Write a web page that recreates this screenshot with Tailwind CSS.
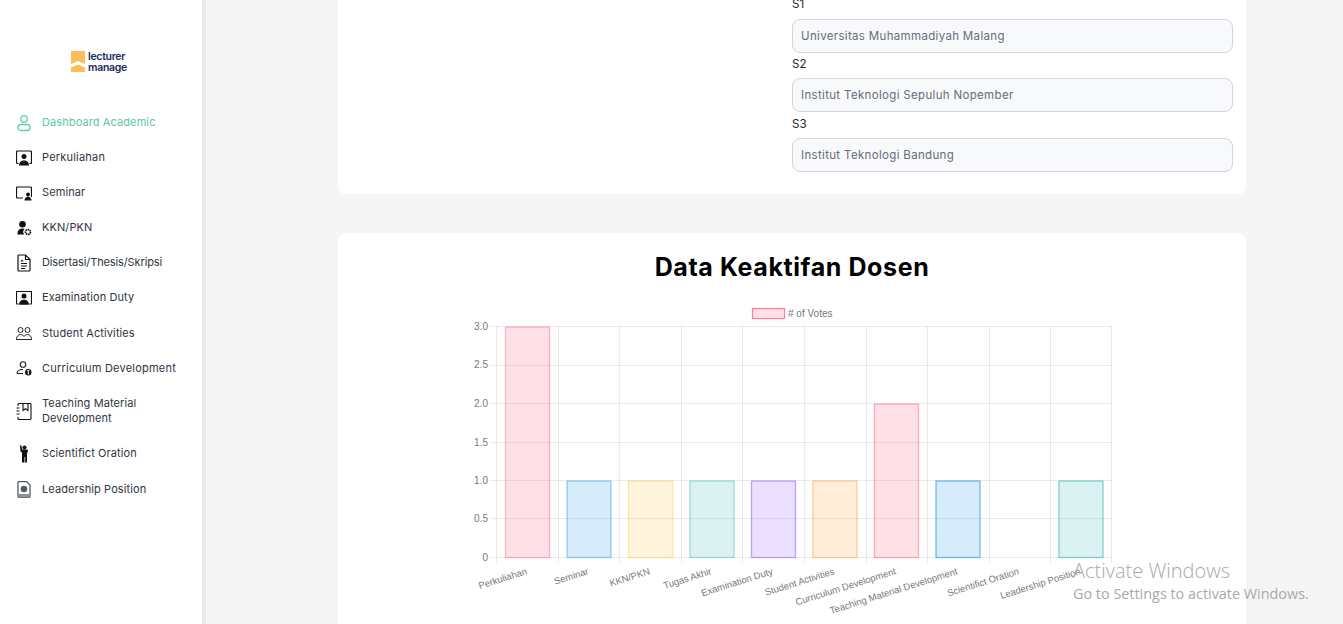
<!DOCTYPE html>
<html lang="en">
  <head>
    <meta charset="UTF-8" />
    <meta name="viewport" content="width=device-width, initial-scale=1.0" />
    <script src="https://cdn.jsdelivr.net/npm/@tailwindcss/browser@4"></script>
    <title>Lecturer Manage</title>
  </head>
  <body class="bg-[#f5f5f5] font-['Inter',sans-serif] overflow-hidden">
    <div class="relative flex h-[624px] overflow-hidden">
      <!-- Sidebar -->
      <aside class="w-[206px] h-full shrink-0 bg-white border-r-[4px] border-[#e8e8ee]">
        <div class="flex items-start h-[105px] pl-[71px] pt-[51px] gap-[3px]">
          <svg width="14" height="21" viewBox="0 0 14 21">
            <path d="M0 0h14v13L7 10 0 13z" fill="#fdbd5a" />
            <path d="M0 16.500l7-3 7 3V21H0z" fill="#fdbd5a" />
          </svg>
          <div class="text-[10.500px] leading-[11px] font-semibold text-[#1e2a5e] tracking-[-0.3px]">lecturer<br />manage</div>
        </div>
        <nav class="text-[11px] tracking-[0.1px] text-[#2f3542] leading-[15px]">
          <a class="flex items-center h-[35px] pl-[16px] gap-[10px] text-[#5cc9a0]">
            <svg class="w-[16px] h-[18px] shrink-0" viewBox="0 0 16 18" fill="none" stroke="#5ed3a6" stroke-width="1.300">
              <circle cx="8" cy="5" r="3.300" />
              <rect x="2" y="10.500" width="12" height="6" rx="3" />
            </svg>
            Dashboard Academic
          </a>
          <a class="flex items-center h-[35px] pl-[16px] gap-[10px] tracking-[0.2px]">
            <svg class="w-[16px] h-[16px] shrink-0" viewBox="0 0 16 16" fill="none" stroke="#111" stroke-width="1.200">
              <path d="M2.500 13.500H1.500a1 1 0 0 1-1-1V2a1 1 0 0 1 1-1h13a1 1 0 0 1 1 1v10.500a1 1 0 0 1-1 1H13.500" />
              <circle cx="8" cy="6.500" r="2.500" fill="#111" stroke="none" />
              <path d="M3 15.500c0-3 2-5 5-5s5 2 5 5z" fill="#111" stroke="none" />
            </svg>
            Perkuliahan
          </a>
          <a class="flex items-center h-[35px] pl-[16px] gap-[10px]">
            <svg class="w-[16px] h-[16px] shrink-0" viewBox="0 0 16 16" fill="none" stroke="#111" stroke-width="1.200">
              <path d="M7 13H1.500a1 1 0 0 1-1-1V3a1 1 0 0 1 1-1h13a1 1 0 0 1 1 1v9" />
              <circle cx="12" cy="9.500" r="2" fill="#111" stroke="none" />
              <path d="M8.500 15.500c0-2.500 1.500-3.800 3.500-3.800s3.500 1.300 3.500 3.800z" fill="#111" stroke="none" />
            </svg>
            Seminar
          </a>
          <a class="flex items-center h-[35px] pl-[16px] gap-[10px]">
            <svg class="w-[16px] h-[16px] shrink-0" viewBox="0 0 16 16">
              <circle cx="6.500" cy="4.300" r="3.300" fill="#111" />
              <path d="M1.500 14.500v-1.500c0-2.500 2-4.500 5-4.500 1 0 1.600.2 2.200.5a4 4 0 0 0-.5 5.500z" fill="#111" />
              <circle cx="12" cy="12" r="2.500" fill="none" stroke="#111" stroke-width="1.700" stroke-dasharray="1.600 .6" />
            </svg>
            KKN/PKN
          </a>
          <a class="flex items-center h-[35px] pl-[16px] gap-[10px] tracking-[-0.12px]">
            <svg class="w-[16px] h-[18px] shrink-0" viewBox="0 0 16 18" fill="none" stroke="#111" stroke-width="1.200">
              <path d="M3 1h6.500L14 5.500V16a1 1 0 0 1-1 1H3a1 1 0 0 1-1-1V2a1 1 0 0 1 1-1z" />
              <path d="M9.500 1v4.500H14M5 9.500h6M5 12h6M5 14.500h4" />
              <path d="M4.500 7.500l1.500-2 1.500 2z" fill="#111" stroke="none" />
            </svg>
            Disertasi/Thesis/Skripsi
          </a>
          <a class="flex items-center h-[35px] pl-[16px] gap-[10px]">
            <svg class="w-[16px] h-[14px] shrink-0" viewBox="0 0 16 14" fill="none" stroke="#111" stroke-width="1.200">
              <path d="M2.500 13H1a.5.5 0 0 1-.5-.5V1A.5.5 0 0 1 1 .5h14a.5.5 0 0 1 .5.5v11.500a.5.5 0 0 1-.5.5h-1.500" />
              <circle cx="8" cy="5" r="2.500" fill="#111" stroke="none" />
              <path d="M3 13.800c0-3 2-5 5-5s5 2 5 5z" fill="#111" stroke="none" />
            </svg>
            Examination Duty
          </a>
          <a class="flex items-center h-[36px] pl-[16px] gap-[10px]">
            <svg class="w-[16px] h-[13px] shrink-0" viewBox="0 0 16 13" fill="none" stroke="#222" stroke-width="1">
              <circle cx="4.500" cy="3" r="2.500" />
              <circle cx="11.500" cy="3" r="2.500" />
              <path d="M.5 12.500c0-3 1.500-5 4-5 1.500 0 2.500.6 3.500 1.800 1-1.200 2-1.800 3.500-1.800 2.500 0 4 2 4 5z" />
            </svg>
            Student Activities
          </a>
          <a class="flex items-center h-[35px] pl-[16px] gap-[10px] tracking-[0.22px]">
            <svg class="w-[16px] h-[15px] shrink-0" viewBox="0 0 16 15" fill="none" stroke="#222" stroke-width="1.100">
              <circle cx="7" cy="3.500" r="2.800" />
              <path d="M1 12.500c0-2.500 2.500-4 6-4" />
              <path d="M1 12.500h6" />
              <circle cx="12.300" cy="11.300" r="3.200" fill="#111" stroke="none" />
              <path d="M12.300 10.500v3M11 9.800h2.600" stroke="#fff" />
            </svg>
            Curriculum Development
          </a>
          <a class="flex items-center h-[50px] pl-[16px] gap-[10px]">
            <svg class="w-[16px] h-[17px] shrink-0" viewBox="0 0 16 17" fill="none" stroke="#111" stroke-width="1.100">
              <path d="M2 3V1.500a1 1 0 0 1 1-1h11a1 1 0 0 1 1 1v14a1 1 0 0 1-1 1H3a1 1 0 0 1-1-1V14" />
              <path d="M0.500 5h3M0.500 8h3M0.500 11h3" />
              <path d="M7 .5v7l2.500-1.800L12 7.500v-7" />
            </svg>
            <span>Teaching Material<br />Development</span>
          </a>
          <a class="flex items-center h-[35px] pl-[16px] gap-[10px]">
            <svg class="w-[16px] h-[18px] shrink-0" viewBox="0 0 16 18" fill="#111">
              <circle cx="8.500" cy="2.500" r="2" />
              <path d="M4 .500l1.300-.300 1 4.300h5l.7 1-1 3.500V17.500H9.200V12H8.500v5.500H6V7.500L4.500 6.500z" />
            </svg>
            Scientifict Oration
          </a>
          <a class="flex items-center h-[36px] pl-[16px] gap-[10px]">
            <svg class="w-[16px] h-[17px] shrink-0" viewBox="0 0 16 17">
              <path d="M3 .5h7.500L14 4v11.500a1 1 0 0 1-1 1H3a1 1 0 0 1-1-1v-14a1 1 0 0 1 1-1z" fill="#fff" stroke="#555b66" stroke-width="1.300" />
              <circle cx="8" cy="8" r="3.300" fill="#555b66" />
              <path d="M2 13h12v2.500a1 1 0 0 1-1 1H3a1 1 0 0 1-1-1z" fill="#8a8f98" />
            </svg>
            Leadership Position
          </a>
        </nav>
      </aside>

      <!-- Content -->
      <main class="flex-1 pl-[132px] pr-[97px] -mt-[6px]">
        <section class="bg-white rounded-b-lg h-[200px] pl-[454px] pr-[13px] text-[11.500px] leading-[16px] text-[#212529]">
          <label class="block pt-[2px]">S1</label>
          <div class="flex items-center h-[34px] mt-[7px] px-[8px] rounded-lg border border-[#d4d4de] bg-[#f8f9fb] text-[#666d78] tracking-[0.33px]">Universitas Muhammadiyah Malang</div>
          <label class="block mt-[3px]">S2</label>
          <div class="flex items-center h-[34px] mt-[6px] px-[8px] rounded-lg border border-[#d4d4de] bg-[#f8f9fb] text-[#666d78] tracking-[0.33px]">Institut Teknologi Sepuluh Nopember</div>
          <label class="block mt-[4px]">S3</label>
          <div class="flex items-center h-[34px] mt-[6px] px-[8px] rounded-lg border border-[#d4d4de] bg-[#f8f9fb] text-[#666d78] tracking-[0.33px]">Institut Teknologi Bandung</div>
        </section>

        <section class="bg-white rounded-lg mt-[39px] h-[420px]">
          <h2 class="pt-[17px] text-center text-[25px] leading-[34px] font-bold tracking-[0.6px] text-black">Data Keaktifan Dosen</h2>
          <svg class="mt-[16px] block" width="908" height="320" viewBox="338 300 908 320" font-family="'Liberation Sans',sans-serif" font-size="10" fill="#777">
            <!-- legend -->
            <rect x="752.500" y="308.500" width="32" height="10" fill="rgb(255 99 132 / .2)" stroke="rgb(255 99 132 / .8)" stroke-width="1.200" />
            <text x="788" y="317">&#35; of Votes</text>
            <!-- grid -->
            <g stroke="rgb(0 0 0 / .08)" stroke-width="1">
              <path d="M490 326.500H1112M490 365.500H1112M490 403.500H1112M490 442.500H1112M490 480.500H1112M490 518.500H1112M490 557.500H1112" />
              <path d="M496.500 326V563M558.500 326V563M619.500 326V563M681.500 326V563M742.500 326V563M804.500 326V563M866.500 326V563M927.500 326V563M989.500 326V563M1050.500 326V563M1111.500 326V563" />
            </g>
            <!-- bars -->
            <g stroke-width="1.300">
              <rect x="505.500" y="327" width="44" height="230.500" fill="rgb(255 99 132 / .2)" stroke="rgb(255 99 132 / .45)" />
              <rect x="567" y="481" width="44" height="76.500" fill="rgb(54 162 235 / .2)" stroke="rgb(54 162 235 / .5)" />
              <rect x="628.500" y="481" width="44" height="76.500" fill="rgb(255 206 86 / .2)" stroke="rgb(255 206 86 / .5)" />
              <rect x="690" y="481" width="44" height="76.500" fill="rgb(75 192 192 / .2)" stroke="rgb(75 192 192 / .5)" />
              <rect x="751.500" y="481" width="44" height="76.500" fill="rgb(153 102 255 / .2)" stroke="rgb(153 102 255 / .6)" />
              <rect x="813" y="481" width="44" height="76.500" fill="rgb(255 159 64 / .2)" stroke="rgb(255 159 64 / .5)" />
              <rect x="874.500" y="404" width="44" height="153.500" fill="rgb(255 99 132 / .2)" stroke="rgb(255 99 132 / .5)" />
              <rect x="936" y="481" width="44" height="76.500" fill="rgb(54 162 235 / .2)" stroke="rgb(54 162 235 / .7)" />
              <rect x="1059" y="481" width="44" height="76.500" fill="rgb(75 192 192 / .2)" stroke="rgb(75 192 192 / .7)" />
            </g>
            <!-- y axis labels -->
            <g text-anchor="end">
              <text x="488" y="330">3.0</text>
              <text x="488" y="368">2.5</text>
              <text x="488" y="407">2.0</text>
              <text x="488" y="446">1.5</text>
              <text x="488" y="484">1.0</text>
              <text x="488" y="522">0.5</text>
              <text x="488" y="561">0</text>
            </g>
            <!-- x axis labels -->
            <g text-anchor="end" font-size="9.500">
              <text transform="translate(527.500 574) rotate(-17.500)">Perkuliahan</text>
              <text transform="translate(589 574) rotate(-17.500)">Seminar</text>
              <text transform="translate(650.500 574) rotate(-17.500)">KKN/PKN</text>
              <text transform="translate(712 574) rotate(-17.500)">Tugas Akhir</text>
              <text transform="translate(773.500 574) rotate(-17.500)">Examination Duty</text>
              <text transform="translate(835 574) rotate(-17.500)">Student Activities</text>
              <text transform="translate(896.500 574) rotate(-17.500)">Curriculum Development</text>
              <text transform="translate(958 574) rotate(-17.500)">Teaching Material Development</text>
              <text transform="translate(1019.500 574) rotate(-17.500)">Scientifict Oration</text>
              <text transform="translate(1081 574) rotate(-17.500)">Leadership Position</text>
            </g>
          </svg>
        </section>
      </main>

      <!-- Windows watermark -->
      <div class="absolute left-[1073px] top-[558px] font-['Open_Sans',sans-serif] text-[#a9a9a9] pointer-events-none whitespace-nowrap">
        <div class="text-[20px] leading-[26px] font-light">Activate Windows</div>
        <div class="text-[14.400px] leading-[19px]">Go to Settings to activate Windows.</div>
      </div>
    </div>
  </body>
</html>
